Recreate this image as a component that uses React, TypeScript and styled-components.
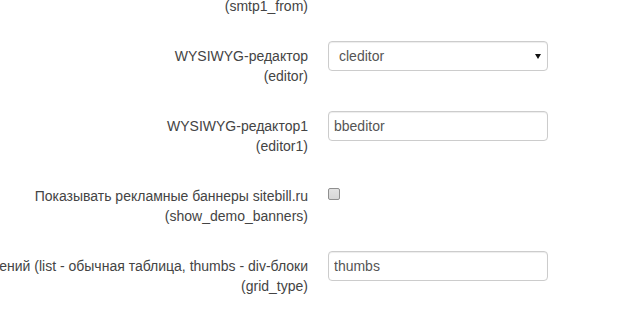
import { FC } from 'react';
import styled, { createGlobalStyle } from 'styled-components';

interface Field {
  title: string;
  name: string;
  kind: 'text' | 'select' | 'checkbox' | 'none';
  value?: string;
  options?: string[];
}

const fields: Field[] = [
  { title: 'Адрес отправителя', name: 'smtp1_from', kind: 'none' },
  { title: 'WYSIWYG-редактор', name: 'editor', kind: 'select', value: 'cleditor', options: ['cleditor', 'ckeditor', 'bbeditor'] },
  { title: 'WYSIWYG-редактор1', name: 'editor1', kind: 'text', value: 'bbeditor' },
  { title: 'Показывать рекламные баннеры sitebill.ru', name: 'show_demo_banners', kind: 'checkbox' },
  { title: 'Тип отображения списка объявлений (list - обычная таблица, thumbs - div-блоки', name: 'grid_type', kind: 'text', value: 'thumbs' },
];

const Control: FC<{ field: Field }> = ({ field }) => {
  if (field.kind === 'select')
    return (
      <SelectWrap>
        <Select defaultValue={ field.value }>
          { field.options?.map(o => <option key={ o } value={ o }>{ o }</option>) }
        </Select>
        <Caret />
      </SelectWrap>
    );
  if (field.kind === 'text')
    return <TextInput type="text" defaultValue={ field.value } />;
  if (field.kind === 'checkbox')
    return <CheckWrap><Check type="checkbox" /></CheckWrap>;
  return null;
};

const App: FC = () => (
  <>
    <GlobalStyle />
    <Form>
      { fields.map(f => (
        <Row key={ f.name }>
          <Label>
            <LabelLine>{ f.title }</LabelLine>
            <LabelLine>({ f.name })</LabelLine>
          </Label>
          <div><Control field={ f } /></div>
        </Row>
      )) }
    </Form>
  </>
);

const GlobalStyle = createGlobalStyle`
  html, body {
    margin: 0;
    padding: 0;
    background: #fff;
    overflow: hidden;
  }
  body {
    font-family: "Liberation Sans", Arial, sans-serif;
    font-size: 14px;
    line-height: 20px;
    color: #444;
  }
`;

const Form = styled.form`
  margin-top: -29px;
  display: flex;
  flex-direction: column;
`;

const Row = styled.div`
  display: grid;
  grid-template-columns: 308px 220px;
  column-gap: 20px;
  height: 70px;
`;

const Label = styled.label`
  display: flex;
  flex-direction: column;
  align-items: flex-end;
  padding-top: 5px;
`;

const LabelLine = styled.span`
  white-space: nowrap;
  text-align: right;
`;

const SelectWrap = styled.div`
  position: relative;
  width: 220px;
`;

const Select = styled.select`
  appearance: none;
  width: 220px;
  height: 30px;
  box-sizing: border-box;
  padding: 0 24px 0 10px;
  font-family: "Liberation Sans", Arial, sans-serif;
  font-size: 14px;
  color: #555;
  background: #fff;
  border: 1px solid #ccc;
  border-radius: 4px;
  box-shadow: inset 0 1px 1px rgba(0, 0, 0, 0.075);
  outline: none;
`;

const Caret = styled.span`
  position: absolute;
  right: 7px;
  top: 13px;
  width: 0;
  height: 0;
  border-left: 3.5px solid transparent;
  border-right: 3.5px solid transparent;
  border-top: 5px solid #111;
  pointer-events: none;
`;

const TextInput = styled.input`
  width: 220px;
  height: 30px;
  box-sizing: border-box;
  padding: 0 5px;
  font-family: "Liberation Sans", Arial, sans-serif;
  font-size: 14px;
  color: #555;
  background: #fff;
  border: 1px solid #ccc;
  border-radius: 4px;
  box-shadow: inset 0 1px 1px rgba(0, 0, 0, 0.075);
  outline: none;
`;

const CheckWrap = styled.div`
  padding-top: 7px;
`;

const Check = styled.input`
  appearance: none;
  display: block;
  margin: 0;
  width: 12px;
  height: 12px;
  box-sizing: border-box;
  border: 1px solid #8f8f8f;
  border-radius: 2px;
  background: linear-gradient(#e2e2e2, #d6d6d6);
`;

export default App;
